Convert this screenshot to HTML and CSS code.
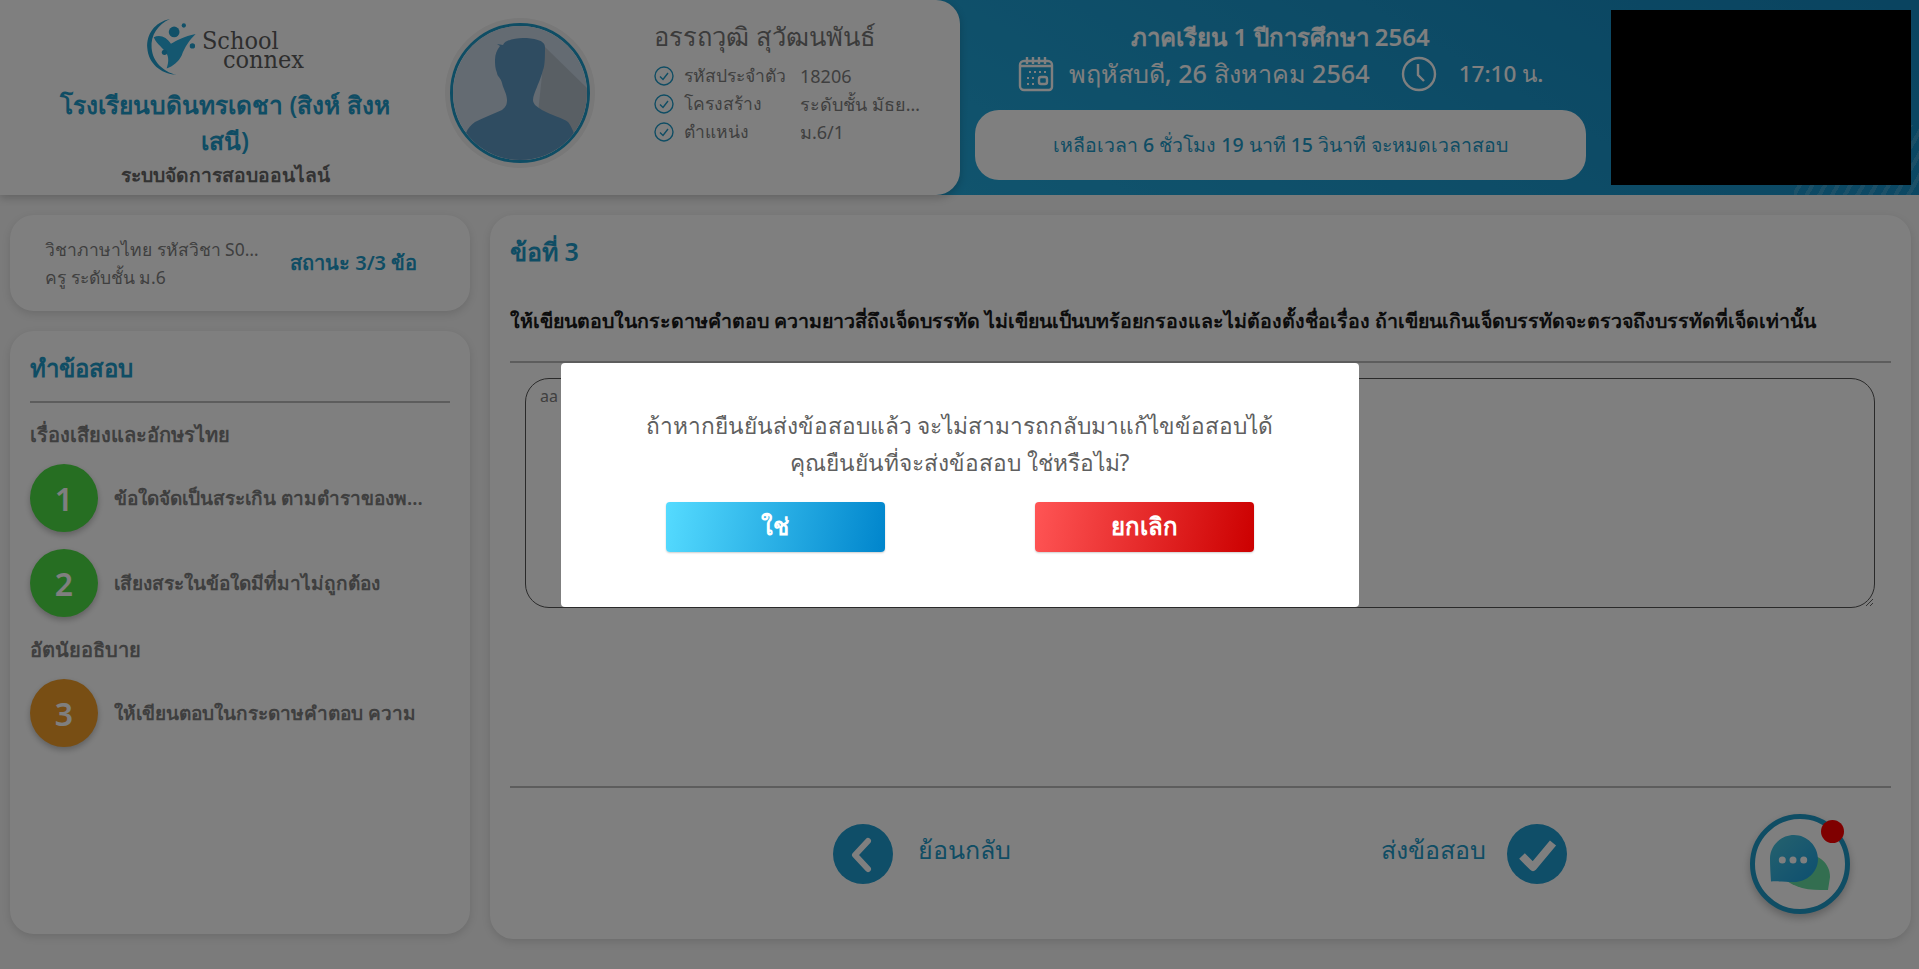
FILE: index.html
```html
<!DOCTYPE html>
<html lang="th">
<head>
    <meta charset="utf-8">
    <title>ระบบจัดการสอบออนไลน์</title>
    <link rel="stylesheet" href="styles.css">
</head>
<body>
    <header class="topbar">
        <div class="school-panel">
            <div class="school">
                <div class="logo">
                    <svg class="logo-mark" viewBox="0 0 48 54" width="52" height="58">
                        <path d="M22 1C8 4 0 15 1 28c1 14 12 24 27 25-12-3-22-12-23-25C4 16 11 6 22 1z" fill="#22a0d0"/>
                        <path d="M7 18c6-3 12 0 16 6 6-3 12-7 23-9-6 6-10 12-13 20-3 6-8 10-14 12 2-6 2-10 0-14-3-5-9-8-12-15z" fill="#2aaee0"/>
                        <circle cx="26" cy="13" r="5" fill="#22a0d0"/>
                        <circle cx="35" cy="7" r="2" fill="#22a0d0"/>
                        <circle cx="43" cy="26" r="2.500" fill="#22a0d0"/>
                        <circle cx="17" cy="32" r="2.500" fill="#22a0d0"/>
                    </svg>
                    <div class="logo-text">
                        <span class="logo-school">School</span>
                        <span class="logo-connex">connex</span>
                    </div>
                </div>
                <div class="school-name">โรงเรียนบดินทรเดชา (สิงห์ สิงห เสนี)</div>
                <div class="school-sub">ระบบจัดการสอบออนไลน์</div>
            </div>
            <div class="avatar">
                <svg viewBox="0 0 134 134" width="134" height="134">
                    <rect width="134" height="134" fill="#c8d6e4"/>
                    <path d="M92 21L134 62V134H80z" fill="#b2bec9"/>
                    <path d="M44 18l6 1C52 14 62 12 70 12c10 0 22 2 22 9 0 9 0 19-2 23-2 8-5 14-6 17-2 5-4 9-4 13 0 4 4 7 9 10 9 5 21 8 26 12 3 4 6 10 6 13l13 25H0l13-27c2-5 5-8 9-11 8-4 18-8 27-12 4-3 5-6 5-10 0-6-4-12-5-17-1-5-5-7-5-10-2-5-2-9-2-13 0-6 2-10 5-14z" fill="#5f98c2"/>
                </svg>
            </div>
            <div class="student">
                <div class="student-name">อรรถวุฒิ สุวัฒนพันธ์</div>
                <div class="info-row">
                    <svg class="info-check" viewBox="0 0 20 20" width="20" height="20"><circle cx="10" cy="10" r="9"/><path d="M6 10.500l3 3 5-6.500"/></svg>
                    <span class="info-label">รหัสประจำตัว</span>
                    <span class="info-value">18206</span>
                </div>
                <div class="info-row">
                    <svg class="info-check" viewBox="0 0 20 20" width="20" height="20"><circle cx="10" cy="10" r="9"/><path d="M6 10.500l3 3 5-6.500"/></svg>
                    <span class="info-label">โครงสร้าง</span>
                    <span class="info-value">ระดับชั้น มัธยมศึกษาปีที่ 6</span>
                </div>
                <div class="info-row">
                    <svg class="info-check" viewBox="0 0 20 20" width="20" height="20"><circle cx="10" cy="10" r="9"/><path d="M6 10.500l3 3 5-6.500"/></svg>
                    <span class="info-label">ตำแหน่ง</span>
                    <span class="info-value">ม.6/1</span>
                </div>
            </div>
        </div>
        <div class="term-panel">
            <div class="term">
                <div class="term-title">ภาคเรียน 1 ปีการศึกษา 2564</div>
                <div class="term-date">
                    <svg class="term-icon" viewBox="0 0 36 36" width="36" height="36">
                        <path d="M6 5h24a4 4 0 0 1 4 4v22a3 3 0 0 1-3 3H6a4 4 0 0 1-4-4V9a4 4 0 0 1 4-4z"/>
                        <path d="M9 1v7M15 1v7M21 1v7M27 1v7M2 10h32"/>
                        <path class="term-dots" d="M11 16h2M16 16h2M21 16h2M26 16h2M9 22h2M14 22h2M9 28h2M14 28h2"/>
                        <rect x="21" y="21" width="8" height="7" rx="2"/>
                    </svg>
                    <span>พฤหัสบดี, 26 สิงหาคม 2564</span>
                    <svg class="term-icon term-clock" viewBox="0 0 36 36" width="36" height="36">
                        <circle cx="18" cy="18" r="16"/>
                        <path d="M17 8v11l6 6"/>
                    </svg>
                    <span class="term-time">17:10 น.</span>
                </div>
                <div class="countdown">เหลือเวลา 6 ชั่วโมง 19 นาที 15 วินาที จะหมดเวลาสอบ</div>
            </div>
            <div class="camera"></div>
        </div>
    </header>

    <main class="content">
        <aside class="sidebar">
            <div class="card subject">
                <div class="subject-text">
                    <div class="subject-line">วิชาภาษาไทย รหัสวิชา S00123</div>
                    <div class="subject-line">ครู ระดับชั้น ม.6</div>
                </div>
                <div class="subject-status">สถานะ 3/3 ข้อ</div>
            </div>
            <div class="card questions">
                <h2 class="questions-title">ทำข้อสอบ</h2>
                <h3 class="group-title">เรื่องเสียงและอักษรไทย</h3>
                <div class="question-item">
                    <span class="num num-done">1</span>
                    <span class="question-label">ข้อใดจัดเป็นสระเกิน ตามตำราของพระยาอุปกิตศิลปสาร</span>
                </div>
                <div class="question-item">
                    <span class="num num-done">2</span>
                    <span class="question-label">เสียงสระในข้อใดมีที่มาไม่ถูกต้อง</span>
                </div>
                <h3 class="group-title group-title-next">อัตนัยอธิบาย</h3>
                <div class="question-item">
                    <span class="num num-current">3</span>
                    <span class="question-label">ให้เขียนตอบในกระดาษคำตอบ ความ</span>
                </div>
            </div>
        </aside>

        <section class="card exam">
            <h2 class="exam-no">ข้อที่ 3</h2>
            <p class="exam-question">ให้เขียนตอบในกระดาษคำตอบ ความยาวสี่ถึงเจ็ดบรรทัด ไม่เขียนเป็นบทร้อยกรองและไม่ต้องตั้งชื่อเรื่อง ถ้าเขียนเกินเจ็ดบรรทัดจะตรวจถึงบรรทัดที่เจ็ดเท่านั้น</p>
            <textarea class="exam-answer">aa</textarea>
            <div class="exam-nav">
                <div class="nav-item nav-back">
                    <span class="nav-btn">
                        <svg viewBox="0 0 60 60" width="60" height="60"><path d="M35 17L22 31l13 14" fill="none" stroke="#fff" stroke-width="6" stroke-linecap="round" stroke-linejoin="round"/></svg>
                    </span>
                    <span class="nav-label">ย้อนกลับ</span>
                </div>
                <div class="nav-item nav-send">
                    <span class="nav-label">ส่งข้อสอบ</span>
                    <span class="nav-btn">
                        <svg viewBox="0 0 60 60" width="60" height="60"><path d="M15 32l11 11 20-24" fill="none" stroke="#fff" stroke-width="8" stroke-linejoin="round"/></svg>
                    </span>
                </div>
                <div class="chat">
                    <svg viewBox="0 0 90 90" width="90" height="90">
                        <defs>
                            <linearGradient id="chatBlue" x1="0" y1="0" x2="1" y2="1">
                                <stop offset="0" stop-color="#4cc4dc"/>
                                <stop offset="1" stop-color="#1a9ee0"/>
                            </linearGradient>
                        </defs>
                        <path d="M50 34c14 2 25 10 25 24l-2 13c-10 0-18 0-26-2-7-2-13-5-18-9z" fill="#66dca0"/>
                        <path d="M39 16c13 0 24 11 24 24s-11 23-24 23c-8 0-15-1-23-.5-.5-8-1-16-1-23 0-13 11-23.500 24-23.500z" fill="url(#chatBlue)"/>
                        <circle cx="27.300" cy="41" r="3.500" fill="#fff"/>
                        <circle cx="38" cy="41" r="3.500" fill="#fff"/>
                        <circle cx="48.700" cy="41" r="3.500" fill="#fff"/>
                    </svg>
                    <span class="chat-badge"></span>
                </div>
            </div>
        </section>
    </main>

    <div class="overlay">
        <div class="modal">
            <p class="modal-text">ถ้าหากยืนยันส่งข้อสอบแล้ว จะไม่สามารถกลับมาแก้ไขข้อสอบได้<br>คุณยืนยันที่จะส่งข้อสอบ ใช่หรือไม่?</p>
            <div class="modal-buttons">
                <button class="button button-yes" type="button">ใช่</button>
                <button class="button button-no" type="button">ยกเลิก</button>
            </div>
        </div>
    </div>
</body>
</html>
```

FILE: styles.css
```css
* {
    box-sizing: border-box;
}

html, body {
    height: 100%;
}

body {
    margin: 0;
    background-color: #f6f6f6;
    color: #7f7f7f;
    font-family: "Noto Sans", "Open Sans", sans-serif;
    overflow: hidden;
}

h2, h3, p {
    margin: 0;
}

/* top bar */
.topbar {
    display: flex;
    height: 195px;
    background: linear-gradient(30deg, #2cc0f0 0%, #1488c0 100%);
}

.school-panel {
    display: flex;
    width: 960px;
    height: 195px;
    background-color: #fff;
    border-radius: 0 24px 24px 0;
    box-shadow: 0 3px 8px rgba(0, 0, 0, .2);
}

.school {
    width: 450px;
    padding: 18px 50px 0 50px;
    text-align: center;
}

.logo {
    display: flex;
    justify-content: center;
    align-items: flex-start;
    gap: 4px;
    height: 56px;
}

.logo-text {
    display: flex;
    flex-direction: column;
    padding-top: 13px;
    font-family: "DejaVu Serif", serif;
    font-stretch: condensed;
    font-size: 25px;
    line-height: 19px;
    color: #5c5c5c;
    text-align: left;
}

.logo-connex {
    margin-left: 21px;
}

.school-name {
    margin-top: 13px;
    font-size: 24.500px;
    font-weight: 600;
    line-height: 36px;
    color: #1f9ac8;
}

.school-sub {
    margin-top: 2px;
    font-size: 19.300px;
    font-weight: 600;
    line-height: 28px;
    color: #666;
}

.avatar {
    width: 140px;
    height: 140px;
    margin-top: 23px;
    border: 3px solid #1f9ac8;
    border-radius: 50%;
    overflow: hidden;
    box-shadow: 0 0 0 5px #f0f0f0;
}

.avatar svg {
    display: block;
}

.student {
    width: 270px;
    margin-left: 64px;
    padding-top: 18px;
}

.student-name {
    font-size: 25.500px;
    font-weight: 500;
    line-height: 36px;
    color: #777;
    margin-bottom: 8px;
}

.info-row {
    display: flex;
    align-items: center;
    height: 28px;
    font-size: 18px;
    color: #7f7f7f;
}

.info-check {
    flex: none;
    fill: none;
    stroke: #1f9ac8;
    stroke-width: 1.400;
    margin-right: 10px;
}

.info-label {
    width: 116px;
    flex: none;
    font-size: 17.500px;
}

.info-value {
    width: 122px;
    overflow: hidden;
    white-space: nowrap;
    text-overflow: ellipsis;
}

.term-panel {
    display: flex;
    flex: 1;
    padding: 10px 8px 10px 15px;
    background:
        repeating-linear-gradient(120deg, rgba(255, 255, 255, .14) 0 4px, transparent 4px 11px) no-repeat right bottom / 125px 70px;
}

.term {
    width: 611px;
    color: #fff;
    text-align: center;
}

.term-title {
    font-size: 24px;
    font-weight: 600;
    line-height: 36px;
    margin-top: 9px;
}

.term-date {
    display: flex;
    justify-content: center;
    align-items: center;
    gap: 15px;
    height: 40px;
    margin-top: -1px;
    font-size: 25.200px;
    font-weight: 500;
}

.term-time {
    font-size: 22.500px;
}

.term-icon {
    fill: none;
    stroke: #fff;
    stroke-width: 2.400;
}

.term-clock {
    margin-left: 16px;
    margin-right: 7px;
}

.term-dots {
    stroke-width: 2;
}

.countdown {
    display: flex;
    justify-content: center;
    align-items: center;
    height: 70px;
    margin-top: 16px;
    background-color: #fff;
    border-radius: 24px;
    color: #1f9ac8;
    font-size: 19.500px;
    font-weight: 500;
}

.camera {
    width: 300px;
    height: 175px;
    margin-left: 25px;
    background-color: #000;
}

/* body of the page */
.content {
    display: flex;
    gap: 20px;
    padding: 20px 8px 0 10px;
}

.card {
    background-color: #fff;
    border-radius: 24px;
    box-shadow: 0 3px 8px rgba(0, 0, 0, .12);
}

.sidebar {
    display: flex;
    flex-direction: column;
    gap: 20px;
    width: 460px;
    flex: none;
}

.subject {
    display: flex;
    align-items: center;
    height: 96px;
    padding-left: 35px;
}

.subject-text {
    width: 222px;
    flex: none;
}

.subject-line {
    font-size: 17.500px;
    line-height: 28px;
    color: #7f7f7f;
    overflow: hidden;
    white-space: nowrap;
    text-overflow: ellipsis;
}

.subject-status {
    margin-left: 23px;
    font-size: 20px;
    font-weight: 600;
    color: #1f9ac8;
}

.questions {
    height: 603px;
    padding: 18px 20px;
}

.questions-title {
    height: 54px;
    font-size: 24px;
    font-weight: 600;
    line-height: 38px;
    color: #1f9ac8;
    border-bottom: 2px solid #bbb;
}

.group-title {
    margin: 16px 0 13px;
    font-size: 20px;
    font-weight: 600;
    line-height: 32px;
    color: #7f7f7f;
}

.group-title-next {
    margin-top: 14px;
}

.question-item {
    display: flex;
    align-items: center;
    gap: 16px;
    margin-bottom: 17px;
}

.num {
    display: flex;
    justify-content: center;
    align-items: center;
    width: 68px;
    height: 68px;
    flex: none;
    border-radius: 50%;
    color: #fff;
    font-size: 32px;
    font-weight: 600;
    box-shadow: 0 3px 6px rgba(0, 0, 0, .25);
}

.num-done {
    background-color: #4cdc44;
}

.num-current {
    background-color: #f09c28;
}

.question-label {
    width: 312px;
    font-size: 19px;
    font-weight: 600;
    color: #7f7f7f;
    overflow: hidden;
    white-space: nowrap;
    text-overflow: ellipsis;
}

.exam {
    flex: 1;
    height: 724px;
    padding: 18px 20px;
}

.exam-no {
    font-size: 25px;
    font-weight: 600;
    line-height: 36px;
    color: #1f9ac8;
}

.exam-question {
    height: 94px;
    padding-top: 35px;
    font-size: 19.600px;
    font-weight: 600;
    line-height: 34px;
    color: #1a1a1a;
    white-space: nowrap;
    border-bottom: 2px solid #bbb;
}

.exam-answer {
    display: block;
    width: 1350px;
    height: 230px;
    margin: 15px 0 0 15px;
    padding: 6px 14px;
    border: 1px solid #555;
    border-radius: 24px;
    background-color: #fff;
    font-family: "Noto Sans", sans-serif;
    font-size: 16px;
    color: #7f7f7f;
    resize: both;
}

.exam-nav {
    display: flex;
    align-items: flex-start;
    height: 135px;
    margin-top: 178px;
    padding-top: 36px;
    border-top: 2px solid #bbb;
}

.nav-item {
    display: flex;
    align-items: center;
    gap: 25px;
    font-size: 25px;
    font-weight: 500;
    color: #1f9ac8;
}

.nav-back {
    margin-left: 323px;
}

.nav-send {
    gap: 21px;
    margin-left: 370px;
}

.nav-btn {
    display: block;
    width: 60px;
    height: 60px;
    border-radius: 50%;
    background-color: #1f9cd0;
}

.nav-label {
    position: relative;
    top: -4px;
}

.chat {
    position: relative;
    width: 100px;
    height: 100px;
    margin: -10px 0 0 183px;
    border: 5px solid #1f9ac8;
    border-radius: 50%;
    background-color: #fff;
    box-shadow: 0 4px 8px rgba(0, 0, 0, .25);
}

.chat-badge {
    position: absolute;
    top: 1px;
    right: 1px;
    width: 23px;
    height: 23px;
    border-radius: 50%;
    background-color: #ff0000;
}

/* confirm dialog */
.overlay {
    position: fixed;
    top: 0;
    left: 0;
    right: 0;
    bottom: 0;
    display: flex;
    justify-content: center;
    align-items: center;
    background-color: rgba(0, 0, 0, .5);
}

.modal {
    width: 798px;
    height: 244px;
    padding-top: 44px;
    background-color: #fff;
    border-radius: 4px;
    text-align: center;
}

.modal-text {
    font-size: 22.700px;
    line-height: 37px;
    color: #5f5f5f;
}

.modal-buttons {
    display: flex;
    justify-content: space-between;
    margin-top: 21px;
    padding: 0 105px;
}

.button {
    width: 219px;
    height: 50px;
    border: none;
    border-radius: 4px;
    color: #fff;
    font-family: "Noto Sans", sans-serif;
    font-size: 24px;
    font-weight: 700;
    box-shadow: 0 1px 2px rgba(0, 0, 0, .2);
}

.button-yes {
    background: linear-gradient(100deg, #55dbff, #0085cc);
}

.button-no {
    background: linear-gradient(100deg, #ff5555, #cc0000);
}
```
